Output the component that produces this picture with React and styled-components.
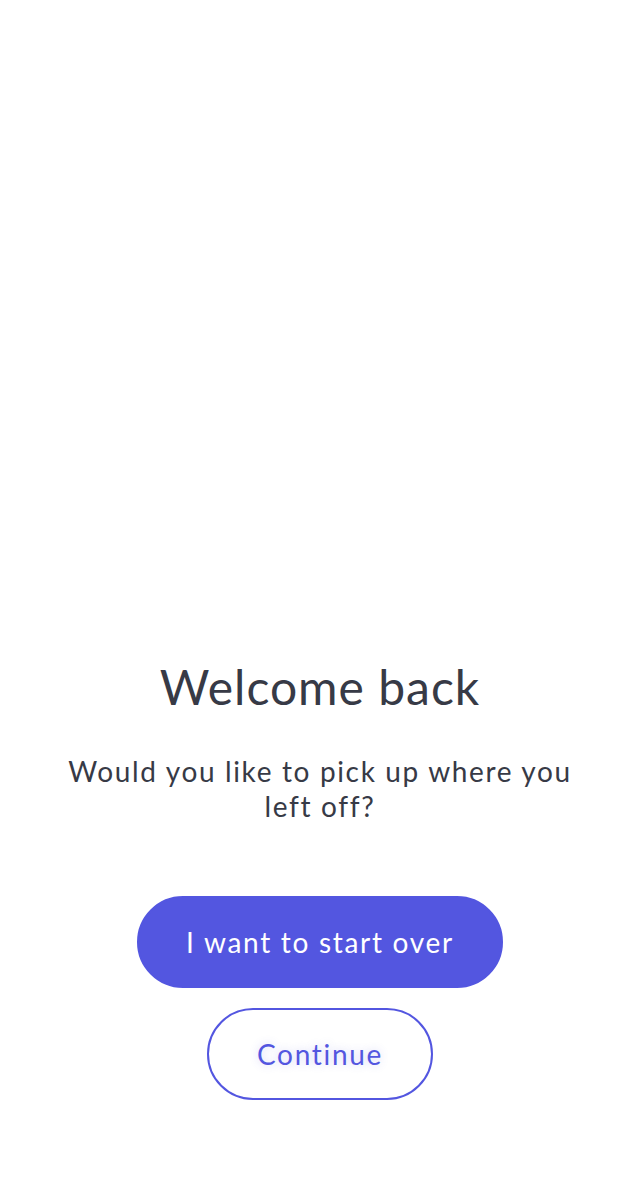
import styled, { createGlobalStyle } from 'styled-components';

const GlobalStyle = createGlobalStyle`
  html, body {
    margin: 0;
    padding: 0;
    background: #fff;
  }
  body {
    font-family: Lato, "Open Sans", sans-serif;
  }
`;

const Page = styled.div`
  min-height: 1200px;
  display: flex;
  flex-direction: column;
  justify-content: flex-end;
  align-items: center;
  padding: 0 30px 100px;
  box-sizing: border-box;
`;

const Title = styled.h1`
  margin: 0;
  font-size: 48px;
  font-weight: 400;
  line-height: 60px;
  color: #373a46;
  text-align: center;
  letter-spacing: 1px;
`;

const Subtitle = styled.p`
  margin: 37px 0 0;
  font-size: 28px;
  line-height: 35px;
  color: #373a46;
  text-align: center;
  letter-spacing: 1.65px;
`;

const Actions = styled.div`
  margin-top: 72px;
  display: flex;
  flex-direction: column;
  align-items: center;
  gap: 20px;
`;

const Button = styled.button`
  height: 92px;
  padding: 0 ${(p) => (p.$outline ? '48px' : '47px')};
  border-radius: 46px;
  font-family: Lato, "Open Sans", sans-serif;
  font-size: 28px;
  letter-spacing: 1.7px;
  cursor: pointer;
  box-sizing: border-box;
  background: ${(p) => (p.$outline ? '#fff' : '#5356e0')};
  color: ${(p) => (p.$outline ? '#5356e0' : '#fff')};
  border: 2px solid #5356e0;
  text-shadow: ${(p) => (p.$outline ? '0 0 8px rgba(83, 86, 224, 0.25)' : 'none')};
`;

export default function App() {
  return (
    <>
      <GlobalStyle />
      <Page>
        <Title>Welcome back</Title>
        <Subtitle>
          Would you like to pick up where you
          <br />
          left off?
        </Subtitle>
        <Actions>
          <Button>I want to start over</Button>
          <Button $outline>Continue</Button>
        </Actions>
      </Page>
    </>
  );
}
